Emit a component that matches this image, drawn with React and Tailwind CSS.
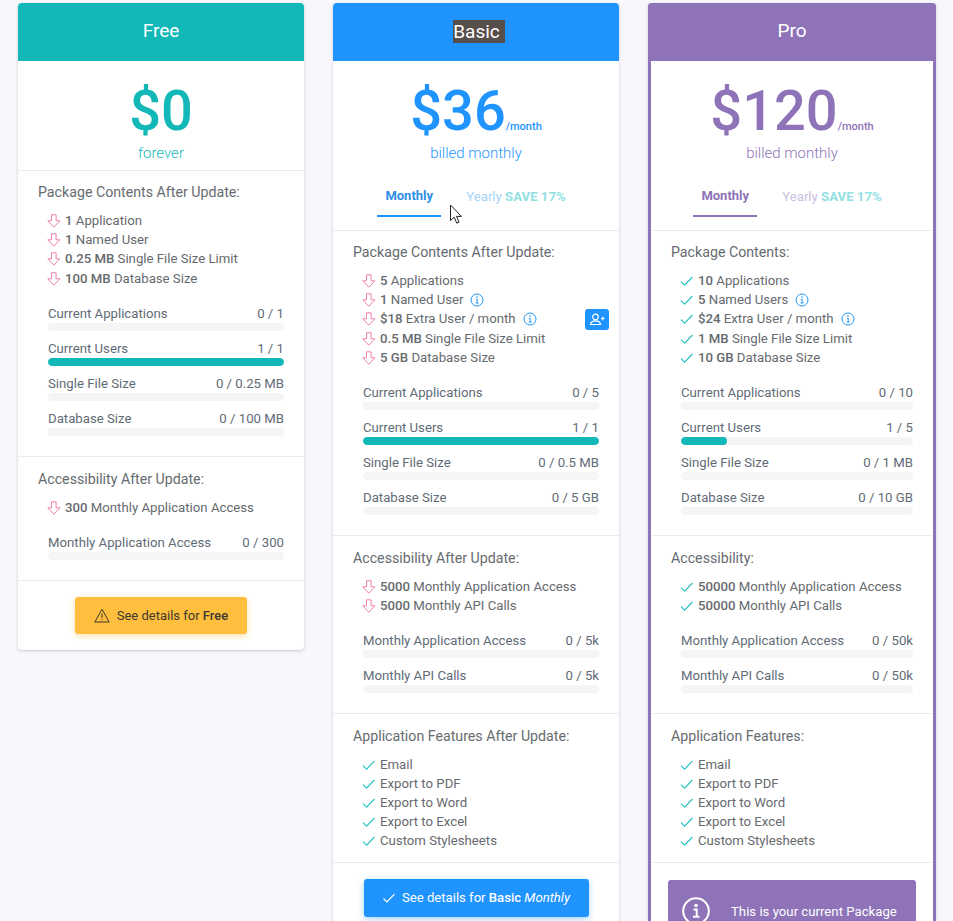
import React from "react";

const Down = () => (
  <svg width="16" height="16" viewBox="0 0 16 16" className="shrink-0 text-[#f07fb0]" fill="none" stroke="currentColor" strokeWidth="1" strokeLinejoin="round">
    <path d="M5.500 1.800h4.600v6h3.800L7.800 14.200 1.800 7.800h3.700z" />
  </svg>
);
const Tick = () => (
  <svg width="16" height="16" viewBox="0 0 16 16" className="shrink-0 text-[#2cc4c4]" fill="none" stroke="currentColor" strokeWidth="1.200">
    <path d="M2 8.600l3.600 3.600L13.400 4" />
  </svg>
);
const Info = () => (
  <svg width="14" height="14" viewBox="0 0 14 14" className="ml-[5px] shrink-0 text-[#2196f3]" fill="none" stroke="currentColor" strokeWidth="1">
    <circle cx="7" cy="7" r="6" />
    <path d="M5.800 6.200H7.200V10M5.600 10h3.100" />
    <circle cx="7" cy="4" r="0.800" fill="currentColor" stroke="none" />
  </svg>
);

const Item = ({ kind, b, t, info, tall }) => (
  <div className={`flex h-[19px] items-center gap-[2px] text-[13.2px] leading-[19px] text-[#666a6e] ${tall ? "mt-px" : ""}`}>
    {kind === "down" ? <Down /> : <Tick />}
    <span className="ml-px whitespace-nowrap">
      {b && <span className="font-medium">{b} </span>}
      {t}
    </span>
    {info && <Info />}
  </div>
);

const Progress = ({ label, value, pct = 0 }) => (
  <div className="h-[35px]">
    <div className="flex h-[20px] justify-between pt-px text-[13.2px] leading-[20px] text-[#5f6b76]">
      <span>{label}</span>
      <span>{value}</span>
    </div>
    <div className="h-2 overflow-hidden rounded-full bg-[#f5f5f5]">
      <div className="h-full rounded-full bg-[#12b8b8]" style={{ width: `${pct}%` }} />
    </div>
  </div>
);

const Section = ({ title, items, bars, cls }) => (
  <div className={`border-t border-[#ececf0] pl-5 pr-5 ${cls}`}>
    <div className="h-5 text-[14.2px] leading-5 text-[#666b70]">{title}</div>
    {items && (
      <div className="mt-[9px] pl-[8px]">
        {items.map((i, n) => (
          <Item key={n} {...i} />
        ))}
      </div>
    )}
    {bars && (
      <div className="mt-[15px] pl-[10px]">
        {bars.map((b, n) => (
          <Progress key={n} {...b} />
        ))}
      </div>
    )}
  </div>
);

const Tabs = ({ active, yearly }) => (
  <div className="flex h-[50px] justify-center pr-[9px] text-[13px]">
    <div className={`flex h-[37px] w-[64px] items-start justify-center border-b-2 pt-[6px] font-bold ${active}`}>Monthly</div>
    <div className={`ml-[25px] whitespace-nowrap pt-[7px] text-[13.2px] font-normal ${yearly}`}>
      Yearly <span className="font-bold text-[#92dfe3]">SAVE 17%</span>
    </div>
  </div>
);

const Header = ({ cls, children }) => (
  <div className={`flex h-[58px] items-center justify-center rounded-t-[4px] pb-[2px] text-[19px] text-white ${cls}`}>{children}</div>
);

const Price = ({ amount, per, sub, cls, h }) => (
  <div className={`flex flex-col items-center ${h} ${cls}`}>
    <div className="mt-[21px] flex h-[58px] items-end">
      <span className="text-[56px] font-medium leading-[58px]">{amount}</span>
      {per && <span className="mb-[5px] text-[11px] font-medium">{per}</span>}
    </div>
    <div className="mt-[3px] text-[15px] font-light leading-5">{sub}</div>
  </div>
);

const features = ["Email", "Export to PDF", "Export to Word", "Export to Excel", "Custom Stylesheets"].map((t) => ({ kind: "tick", t }));

const Card = ({ children, cls }) => (
  <div className={`self-start rounded-[4px] bg-white shadow-[0_1px_3px_rgba(60,70,90,0.25)] ${cls}`}>{children}</div>
);

export default function App() {
  return (
    <div className="relative h-[921px] overflow-hidden bg-[#f8f7fb] pt-[3px] font-['Roboto',sans-serif]">
      <div className="flex pl-[18px]">
        <Card cls="w-[286px]">
          <Header cls="bg-[#12b8b8]">Free</Header>
          <Price amount="$0" sub="forever" cls="text-[#12b8b8]" h="h-[109px]" />
          <Section
            cls="h-[286px] pt-[11px]"
            title="Package Contents After Update:"
            items={[
              { kind: "down", b: "1", t: "Application" },
              { kind: "down", b: "1", t: "Named User" },
              { kind: "down", b: "0.25 MB", t: "Single File Size Limit" },
              { kind: "down", b: "100 MB", t: "Database Size", tall: true },
            ]}
            bars={[
              { label: "Current Applications", value: "0 / 1" },
              { label: "Current Users", value: "1 / 1", pct: 100 },
              { label: "Single File Size", value: "0 / 0.25 MB" },
              { label: "Database Size", value: "0 / 100 MB" },
            ]}
          />
          <Section
            cls="h-[124px] pt-[12px]"
            title="Accessibility After Update:"
            items={[{ kind: "down", b: "300", t: "Monthly Application Access" }]}
            bars={[{ label: "Monthly Application Access", value: "0 / 300" }]}
          />
          <div className="flex h-[70px] justify-center border-t border-[#ececf0] pt-4">
            <button className="flex h-[37px] w-[172px] items-center justify-center gap-[7px] rounded-[3px] bg-[#ffbe3d] text-[13px] text-[#3d3a32] shadow-[0_2px_6px_rgba(255,190,61,0.45)]">
              <svg width="16" height="15" viewBox="0 0 16 15" fill="none" stroke="currentColor" strokeWidth="1" strokeLinejoin="round">
                <path d="M8 1.200L15.200 14H.8z" />
                <path d="M8 5.500v4.500M8 11.200v1" />
              </svg>
              <span>
                See details for <span className="font-medium">Free</span>
              </span>
            </button>
          </div>
        </Card>

        <Card cls="ml-[29px] w-[286px]">
          <Header cls="bg-[#1f94ff]">
            <span className="ml-[6px] bg-[#574f4b] pr-[5px] leading-[23px]">Basic</span>
          </Header>
          <Price amount="$36" per="/month" sub="billed monthly" cls="text-[#1f94ff]" h="h-[119px]" />
          <Tabs active="border-[#1f94ff] text-[#2f8fe6]" yearly="text-[#a5d4f7]" />
          <Section
            cls="relative h-[305px] pt-[11px]"
            title="Package Contents After Update:"
            items={[
              { kind: "down", b: "5", t: "Applications" },
              { kind: "down", b: "1", t: "Named User", info: true },
              { kind: "down", b: "$18", t: "Extra User / month", info: true },
              { kind: "down", b: "0.5 MB", t: "Single File Size Limit", tall: true },
              { kind: "down", b: "5 GB", t: "Database Size" },
            ]}
            bars={[
              { label: "Current Applications", value: "0 / 5" },
              { label: "Current Users", value: "1 / 1", pct: 100 },
              { label: "Single File Size", value: "0 / 0.5 MB" },
              { label: "Database Size", value: "0 / 5 GB" },
            ]}
          />
          <Section
            cls="h-[178px] pt-[12px]"
            title="Accessibility After Update:"
            items={[
              { kind: "down", b: "5000", t: "Monthly Application Access" },
              { kind: "down", b: "5000", t: "Monthly API Calls" },
            ]}
            bars={[
              { label: "Monthly Application Access", value: "0 / 5k" },
              { label: "Monthly API Calls", value: "0 / 5k" },
            ]}
          />
          <Section cls="h-[149px] pt-[12px]" title="Application Features After Update:" items={features} />
          <div className="flex h-[70px] justify-center border-t border-[#ececf0] pt-4">
            <button className="flex h-[38px] w-[225px] items-center justify-center gap-[6px] rounded-[3px] bg-[#1f94ff] text-[13.1px] text-white shadow-[0_2px_6px_rgba(31,148,255,0.4)]">
              <svg width="14" height="14" viewBox="0 0 14 14" fill="none" stroke="currentColor" strokeWidth="1.200">
                <path d="M1.500 7.500l3.400 3.400 7.600-7.800" />
              </svg>
              <span>
                See details for <span className="font-medium">Basic</span> <span className="italic">Monthly</span>
              </span>
            </button>
          </div>
        </Card>

        <Card cls="ml-[29px] w-[288px] border-x-[3px] border-[#8e73b8]">
          <div className="-mx-[3px]">
            <Header cls="bg-[#8e73b8]">Pro</Header>
          </div>
          <Price amount="$120" per="/month" sub="billed monthly" cls="text-[#8e73b8]" h="h-[119px]" />
          <Tabs active="border-[#8e73b8] text-[#8e73b8]" yearly="text-[#c9bfdf]" />
          <Section
            cls="h-[305px] pt-[11px]"
            title="Package Contents:"
            items={[
              { kind: "tick", b: "10", t: "Applications" },
              { kind: "tick", b: "5", t: "Named Users", info: true },
              { kind: "tick", b: "$24", t: "Extra User / month", info: true },
              { kind: "tick", b: "1 MB", t: "Single File Size Limit", tall: true },
              { kind: "tick", b: "10 GB", t: "Database Size" },
            ]}
            bars={[
              { label: "Current Applications", value: "0 / 10" },
              { label: "Current Users", value: "1 / 5", pct: 20 },
              { label: "Single File Size", value: "0 / 1 MB" },
              { label: "Database Size", value: "0 / 10 GB" },
            ]}
          />
          <Section
            cls="h-[178px] pt-[12px]"
            title="Accessibility:"
            items={[
              { kind: "tick", b: "50000", t: "Monthly Application Access" },
              { kind: "tick", b: "50000", t: "Monthly API Calls" },
            ]}
            bars={[
              { label: "Monthly Application Access", value: "0 / 50k" },
              { label: "Monthly API Calls", value: "0 / 50k" },
            ]}
          />
          <Section cls="h-[149px] pt-[12px]" title="Application Features:" items={features} />
          <div className="border-t border-[#ececf0] px-[17px] pt-[17px]">
            <div className="flex h-[70px] items-start rounded-[3px] bg-[#8e73b8] pl-[14px] pt-[17px] text-white">
              <svg width="28" height="28" viewBox="0 0 28 28" fill="none" stroke="currentColor" strokeWidth="2">
                <circle cx="14" cy="14" r="12.800" />
                <path d="M11.500 12.500h3.200v7M11 19.800h6.500" />
                <circle cx="14" cy="8.500" r="1.800" fill="currentColor" stroke="none" />
              </svg>
              <span className="ml-[21px] mt-[5px] text-[13.2px]">This is your current Package</span>
            </div>
          </div>
        </Card>
      </div>

      <button className="absolute left-[585px] top-[309px] flex h-[21px] w-6 items-center justify-center rounded-[3px] bg-[#1f94ff] text-white">
        <svg width="16" height="13" viewBox="0 0 16 13" fill="none" stroke="currentColor" strokeWidth="1.200">
          <circle cx="6.500" cy="4" r="2.800" />
          <path d="M1.500 11.500c.3-2.400 2-3.600 5-3.600s4.700 1.200 5 3.600z" />
          <path d="M12 5.500h3.500M13.750 3.750v3.500" />
        </svg>
      </button>

      <svg className="absolute left-[449px] top-[204px]" width="15" height="21" viewBox="0 0 15 21">
        <path d="M1.500 1v15.500l3.700-3.300 2.600 6 2.300-1-2.600-5.800h5z" fill="#fff" stroke="#222" strokeWidth="1" strokeLinejoin="round" />
      </svg>
    </div>
  );
}
